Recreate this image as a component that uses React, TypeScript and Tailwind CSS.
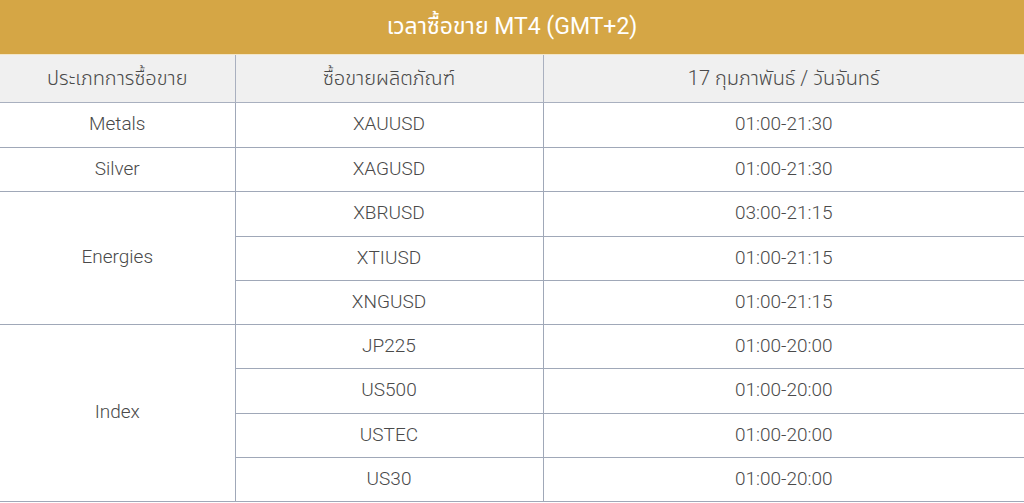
const rows: { group?: string; span?: number; symbol: string; time: string; h: string }[] = [
  { group: "Metals", span: 1, symbol: "XAUUSD", time: "01:00-21:30", h: "h-[45px]" },
  { group: "Silver", span: 1, symbol: "XAGUSD", time: "01:00-21:30", h: "h-[44px]" },
  { group: "Energies", span: 3, symbol: "XBRUSD", time: "03:00-21:15", h: "h-[45px]" },
  { symbol: "XTIUSD", time: "01:00-21:15", h: "h-[44px]" },
  { symbol: "XNGUSD", time: "01:00-21:15", h: "h-[44px]" },
  { group: "Index", span: 4, symbol: "JP225", time: "01:00-20:00", h: "h-[44px]" },
  { symbol: "US500", time: "01:00-20:00", h: "h-[45px]" },
  { symbol: "USTEC", time: "01:00-20:00", h: "h-[44px]" },
  { symbol: "US30", time: "01:00-20:00", h: "h-[44px]" },
];

export default function App() {
  return (
    <div
      className="w-[1024px] h-[503px] overflow-hidden bg-white text-[#4a4a4a]"
      style={{ fontFamily: "Roboto, 'Noto Sans Thai', 'Noto Sans', sans-serif" }}
    >
      <div className="flex h-[55px] items-center justify-center border-b border-[#f3e6c8] bg-[#d5a645] text-[23px] font-normal text-white">
        เวลาซื้อขาย MT4 (GMT+2)
      </div>
      <table className="w-full border-collapse text-center text-[19px] font-light">
        <colgroup>
          <col className="w-[235px]" />
          <col className="w-[308px]" />
          <col />
        </colgroup>
        <thead>
          <tr className="h-[47px] bg-[#f0f0f0] text-[20px]">
            <th className="border-b border-r border-[#a9b0bf] font-light">ประเภทการซื้อขาย</th>
            <th className="border-b border-r border-[#a9b0bf] font-light">ซื้อขายผลิตภัณฑ์</th>
            <th className="border-b border-[#a9b0bf] font-light">17 กุมภาพันธ์ / วันจันทร์</th>
          </tr>
        </thead>
        <tbody>
          {rows.map((r, i) => (
            <tr key={i} className={r.h}>
              {r.group && (
                <td rowSpan={r.span} className="border-b border-r border-[#a0a8b8]">
                  {r.group}
                </td>
              )}
              <td className="border-b border-r border-[#a0a8b8]">{r.symbol}</td>
              <td className="border-b border-[#a0a8b8]">{r.time}</td>
            </tr>
          ))}
        </tbody>
      </table>
    </div>
  );
}
